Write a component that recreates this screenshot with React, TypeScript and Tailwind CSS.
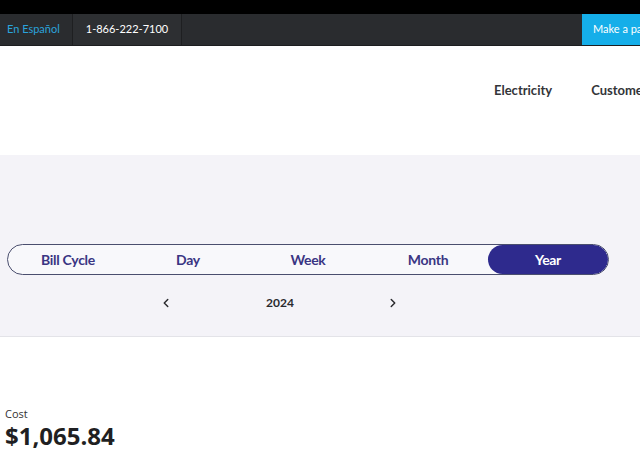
import { ChevronLeft, ChevronRight } from "lucide-react";

const tabs = ["Bill Cycle", "Day", "Week", "Month", "Year"];

const App = () => {
  const active = "Year";

  return (
    <div className="w-[640px] h-[459px] overflow-hidden bg-white font-['Lato',sans-serif]">
      {/* top utility bar */}
      <div className="h-[14px] bg-black" />
      <div className="h-[32px] bg-[#2a2c2f] flex items-stretch text-[11px] border-b border-[#1d1e20]">
        <a className="w-[72px] flex items-center pl-[7px] text-[#2aa3dc]">En Español</a>
        <div className="w-[110px] flex items-center justify-center text-white border-x border-[#1e1f21] bg-[#2d2f32]">
          1-866-222-7100
        </div>
        <div className="flex-1" />
        <button className="w-[58px] bg-[#15aee9] text-white text-[11px] pl-[11px] text-left whitespace-nowrap overflow-hidden">
          Make a payment
        </button>
      </div>

      {/* main header */}
      <header className="h-[109px] flex items-start pt-[35px] pl-[494px] overflow-hidden">
        <nav className="flex gap-[39px] text-[13px] font-bold text-[#333539] whitespace-nowrap">
          <span>Electricity</span>
          <span>Customer Service</span>
        </nav>
      </header>

      {/* usage filter */}
      <section className="h-[182px] bg-[#f4f3f8] border-b border-[#e3e3e8] pt-[89px] px-[7px]">
        <div className="w-[602px] h-[31px] rounded-full border border-[#4a4e6e] bg-white/40 flex overflow-hidden">
          {tabs.map((t) => (
            <button
              key={t}
              className={
                t === active
                  ? "flex-1 rounded-full bg-[#2e2a8d] text-white text-[14px] font-bold tracking-[-0.3px]"
                  : "flex-1 text-[#3a3583] text-[14px] font-bold tracking-[-0.3px]"
              }
            >
              {t}
            </button>
          ))}
        </div>
        <div className="mt-[19px] flex items-center text-[12px] font-bold text-[#2a2a2e]">
          <ChevronLeft size={14} strokeWidth={2.5} className="ml-[152px]" />
          <span className="ml-[93px]">2024</span>
          <ChevronRight size={14} strokeWidth={2.5} className="ml-[92px]" />
        </div>
      </section>

      {/* cost summary */}
      <div className="pt-[70px] pl-[5px] font-['Open_Sans',sans-serif] flex flex-col gap-[2px]">
        <div className="text-[11px] text-[#333] leading-[13px]">Cost</div>
        <div className="text-[24px] font-bold text-[#1f1f22] leading-[28px]">$1,065.84</div>
      </div>
    </div>
  );
};

export default App;
